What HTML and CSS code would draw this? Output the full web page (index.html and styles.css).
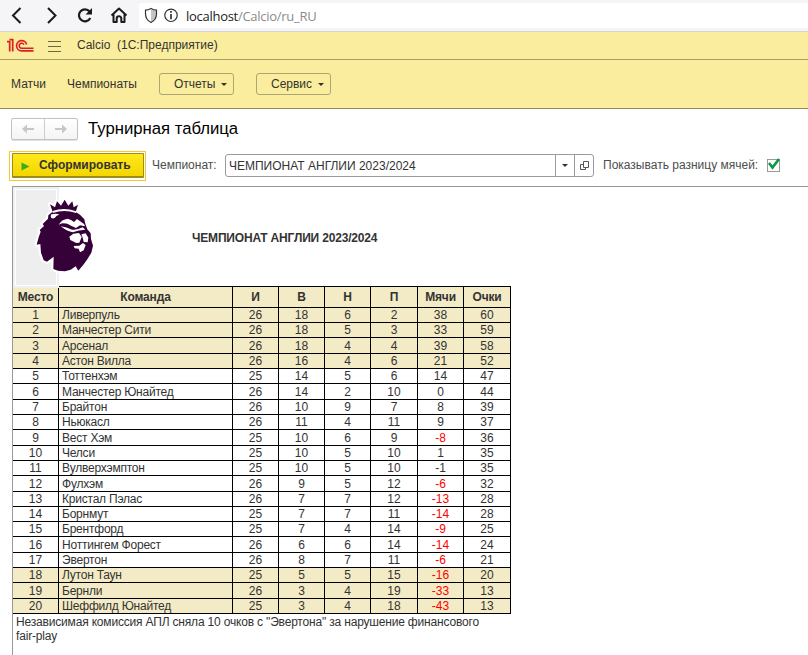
FILE: index.html
```html
<!DOCTYPE html>
<html lang="ru">
<head>
<meta charset="utf-8">
<title>Турнирная таблица</title>
<link rel="stylesheet" href="styles.css">
</head>
<body>
<header class="browser">
  <svg class="browser-icons" width="138" height="31" viewBox="0 0 138 31" fill="none" stroke="#1b1b1d" stroke-width="2">
    <path d="M20.5 8 13 15.5l7.500 7.500M48 8l7.500 7.500L48 23"/>
    <path d="M89.600 11.500A6 6 0 1 0 90.300 18" stroke-width="2.200"/>
    <path d="M92 8v6.500h-6.500z" fill="#1b1b1d" stroke="none"/>
    <path d="m111.500 15.500 7.500-7 7.500 7M113.500 14v8h3.200v-3.500a2.300 2.300 0 0 1 4.600 0V22h3.200v-8" stroke-linejoin="round"/>
  </svg>
  <div class="address">
    <svg width="46" height="26" viewBox="0 0 46 26" fill="none" stroke="#333">
      <path d="M12 6.500v12.300c3-1.400 5-4 5-8V7.700z" fill="#c4c4c6" stroke="none"/>
      <path d="M12 5.500c2 1.200 3.700 1.700 5.500 1.700v3.600c0 4-2.500 7.200-5.500 8.700-3-1.500-5.500-4.700-5.500-8.700V7.200c1.800 0 3.500-.5 5.500-1.700z" stroke-width="1.200"/>
      <circle cx="32" cy="12.300" r="6.200" stroke-width="1.200"/>
      <path d="M32 11v5.300M32 8v1.700" stroke-width="1.700"/>
    </svg>
    <span class="host">localhost</span><span class="path">/Calcio/ru_RU</span>
  </div>
</header>
<div class="titlebar">
  <svg width="28" height="15" viewBox="0 0 28 15" fill="none" stroke="#dc1f26">
    <path d="M0 3.700H2.700V13.500M2.500 1.700H5.700V13.500" stroke-width="1.700"/>
    <path d="M19.600 6.500A5.100 5.100 0 1 0 14.500 12.800H26.500" stroke-width="1.700"/>
    <path d="M17 6.700a2.500 2.500 0 1 0-2.500 3.500H26.500" stroke-width="1.500"/>
  </svg>
  <span class="burger"></span>
  <span class="app-name">Calcio&nbsp; (1С:Предприятие)</span>
</div>
<nav class="menu">
  <span class="link">Матчи</span>
  <span class="link">Чемпионаты</span>
  <span class="drop">Отчеты<i class="caret"></i></span>
  <span class="drop service">Сервис<i class="caret"></i></span>
</nav>
<main>
  <div class="heading">
    <div class="history">
      <span><svg width="14" height="10" viewBox="0 0 14 10"><path d="M1 5l5-4.500V4h7v2H6v3.500z" fill="#c6c6c6"/></svg></span>
      <span><svg width="14" height="10" viewBox="0 0 14 10"><path d="M13 5 8 .5V4H1v2h7v3.500z" fill="#c6c6c6"/></svg></span>
    </div>
    <h1>Турнирная таблица</h1>
  </div>
  <div class="controls">
    <div class="focus"><button class="run"><svg width="9" height="9" viewBox="0 0 9 9"><path d="M.5.500 8.500 4.500l-8 4z" fill="#3cab1d"/></svg>Сформировать</button></div>
    <span class="label">Чемпионат:</span>
    <div class="field">
      <span class="value">ЧЕМПИОНАТ АНГЛИИ 2023/2024</span>
      <span class="cell"><i class="caret"></i></span>
      <span class="cell"><svg width="9" height="9" viewBox="0 0 9 9" fill="none" stroke="#555"><path d="M3.500.500h5v6h-5zM3 3.500H.5v5h5V7"/></svg></span>
    </div>
    <span class="label diff">Показывать разницу мячей:</span>
    <span class="check"><svg width="16" height="14" viewBox="0 0 16 14"><path d="M3 6 6.500 10.500 13 2" fill="none" stroke="#0b9a48" stroke-width="2.700"/></svg></span>
  </div>
  <section class="sheet">
    <div class="sheet-top">
      <div class="logo-box">
        <svg class="lion" width="70" height="84" viewBox="0 0 210 252">
          <path d="M68 53 60 31 75 40 81 22 93 35 104 17 115 35 127 22 131 40 144 32 137 54 150 62 163 76 166 90 172 106 182 118 183 135 189 155 184 176 173 194 164 207 160 212 145 230 137 217 122 227 105 232 84 230 70 225 71 188 51 203 41 199 33 176 31 150 20 152 26 130 32 113 29 108 42 96 38 90 54 74 55 64Z" fill="#360038" stroke="#fff" stroke-width="13" stroke-linejoin="round" paint-order="stroke"/>
          <g fill="#fff">
            <path d="M68 51q34-13 70 1v5q-35-12-70 0z"/>
            <path d="M64 61q16-4 24 1-10 2-13 9-6 4-11 1-4-5 0-11z"/>
            <path d="M86 92q9-16 27-18 11 3 19 10l9-9 21 15 3 7-15-3-12 8-15-7q-19-13-37-3z"/>
            <path d="M92 97q18 2 34 10 15 2 32-7l8 7q-19 0-38 8-15-2-36-18z"/>
            <path d="m118 128 12-9 17-2 8 12-7 17-9 1-18-9z"/>
            <path d="m154 121 13-3 8 13-2 14-12-1-3-13z"/>
            <path d="m131 156 17-1 11-8 8 6-6 16-11 6-4-11-12-1z"/>
          </g>
        </svg>
      </div>
      <h2>ЧЕМПИОНАТ АНГЛИИ 2023/2024</h2>
    </div>
    <table>
      <colgroup><col class="c-place"><col class="c-team"><col class="c-n"><col class="c-n"><col class="c-n"><col class="c-w"><col class="c-n"><col class="c-w"></colgroup>
      <thead><tr><th>Место</th><th>Команда</th><th>И</th><th>В</th><th>Н</th><th>П</th><th>Мячи</th><th>Очки</th></tr></thead>
      <tbody>
        <tr class="zone first"><td>1</td><td>Ливерпуль</td><td>26</td><td>18</td><td>6</td><td>2</td><td>38</td><td>60</td></tr>
        <tr class="zone"><td>2</td><td>Манчестер Сити</td><td>26</td><td>18</td><td>5</td><td>3</td><td>33</td><td>59</td></tr>
        <tr class="zone tall"><td>3</td><td>Арсенал</td><td>26</td><td>18</td><td>4</td><td>4</td><td>39</td><td>58</td></tr>
        <tr class="zone"><td>4</td><td>Астон Вилла</td><td>26</td><td>16</td><td>4</td><td>6</td><td>21</td><td>52</td></tr>
        <tr><td>5</td><td>Тоттенхэм</td><td>25</td><td>14</td><td>5</td><td>6</td><td>14</td><td>47</td></tr>
        <tr class="tall"><td>6</td><td>Манчестер Юнайтед</td><td>26</td><td>14</td><td>2</td><td>10</td><td>0</td><td>44</td></tr>
        <tr><td>7</td><td>Брайтон</td><td>26</td><td>10</td><td>9</td><td>7</td><td>8</td><td>39</td></tr>
        <tr><td>8</td><td>Ньюкасл</td><td>26</td><td>11</td><td>4</td><td>11</td><td>9</td><td>37</td></tr>
        <tr class="tall"><td>9</td><td>Вест Хэм</td><td>25</td><td>10</td><td>6</td><td>9</td><td class="neg">-8</td><td>36</td></tr>
        <tr><td>10</td><td>Челси</td><td>25</td><td>10</td><td>5</td><td>10</td><td>1</td><td>35</td></tr>
        <tr><td>11</td><td>Вулверхэмптон</td><td>25</td><td>10</td><td>5</td><td>10</td><td>-1</td><td>35</td></tr>
        <tr class="tall"><td>12</td><td>Фулхэм</td><td>26</td><td>9</td><td>5</td><td>12</td><td class="neg">-6</td><td>32</td></tr>
        <tr><td>13</td><td>Кристал Пэлас</td><td>26</td><td>7</td><td>7</td><td>12</td><td class="neg">-13</td><td>28</td></tr>
        <tr><td>14</td><td>Борнмут</td><td>25</td><td>7</td><td>7</td><td>11</td><td class="neg">-14</td><td>28</td></tr>
        <tr><td>15</td><td>Брентфорд</td><td>25</td><td>7</td><td>4</td><td>14</td><td class="neg">-9</td><td>25</td></tr>
        <tr class="tall"><td>16</td><td>Ноттингем Форест</td><td>26</td><td>6</td><td>6</td><td>14</td><td class="neg">-14</td><td>24</td></tr>
        <tr><td>17</td><td>Эвертон</td><td>26</td><td>8</td><td>7</td><td>11</td><td class="neg">-6</td><td>21</td></tr>
        <tr class="zone"><td>18</td><td>Лутон Таун</td><td>25</td><td>5</td><td>5</td><td>15</td><td class="neg">-16</td><td>20</td></tr>
        <tr class="zone tall"><td>19</td><td>Бернли</td><td>26</td><td>3</td><td>4</td><td>19</td><td class="neg">-33</td><td>13</td></tr>
        <tr class="zone"><td>20</td><td>Шеффилд Юнайтед</td><td>25</td><td>3</td><td>4</td><td>18</td><td class="neg">-43</td><td>13</td></tr>
      </tbody>
    </table>
    <p class="note">Независимая комиссия АПЛ сняла 10 очков с "Эвертона" за нарушение финансового<br>fair-play</p>
  </section>
</main>
</body>
</html>
```
FILE: styles.css
```css
* { box-sizing: border-box; }
body { margin: 0; height: 655px; overflow: hidden; background: #fff; color: #333; font: 12px/15px "Liberation Sans", Arial, sans-serif; }
svg { display: block; flex: none; }
.browser { display: flex; align-items: flex-start; height: 32px; background: #f5f5f7; border-bottom: 1px solid #d3d3d8; }
.address { display: flex; flex: 1; align-items: center; height: 25px; margin: 3px 0 0 1px; background: #fff; border-radius: 3px 0 0 3px; font: 13px/26px "Open Sans", "Noto Sans", sans-serif; letter-spacing: -.28px; }
.address span { padding-top: 1px; }
.address .host { padding-left: 1px; color: #222; }
.path { color: #8b8b8b; }
.titlebar { display: flex; align-items: center; height: 28px; padding-left: 7px; background: #fbed9e; border-bottom: 1px solid #a79f63; }
.burger { width: 13px; height: 11px; margin: 2px 16px 0 13px; background: linear-gradient(#6c6746 1px, transparent 1px 5px, #6c6746 5px 6px, transparent 6px 10px, #6c6746 10px); }
.app-name { letter-spacing: 0; }
.menu { display: flex; align-items: center; height: 49px; padding-left: 11px; background: #fbed9e; border-bottom: 1px solid #918b5a; }
.link { margin-right: 21px; }
.drop { display: flex; align-items: center; justify-content: space-between; width: 75px; height: 22px; margin-left: 1px; padding: 0 6px 0 14px; border: 1px solid #ada574; border-radius: 3px; }
.drop.service { margin-left: 22px; }
.caret { width: 0; border: 3px solid transparent; border-top-color: #333; border-bottom: 0; }
.heading { display: flex; align-items: center; height: 42px; padding: 0 0 2px 11px; }
.history { display: flex; width: 67px; height: 22px; margin-top: -1px; border: 1px solid #c2c2c2; border-radius: 2px; background: linear-gradient(#fff, #f4f4f4); box-shadow: 0 1px #e2e2e2; }
.history span { display: flex; flex: 1; align-items: center; justify-content: center; }
.history span + span { border-left: 1px solid #ccc; }
h1 { margin: 0 0 0 10px; color: #000; font-size: 16.7px; font-weight: 400; line-height: 20px; }
.controls { display: flex; align-items: flex-start; height: 31px; padding-left: 9px; }
.focus { display: flex; width: 137px; height: 30px; padding: 1px; border: 1px solid #f5c82e; }
.run { display: flex; align-items: center; width: 132px; height: 25px; margin: 0 0 0 1px; padding: 0 0 0 8px; border: 1px solid #9d8c15; border-bottom-width: 2px; border-radius: 1px; background: linear-gradient(#ffe81b, #f4d600); color: #333; font: bold 12px "Liberation Sans", Arial, sans-serif; letter-spacing: .02px; }
.run svg { margin: 3px 9px 0 0; }
.label { width: 73px; margin: 7px 0 0 6px; color: #4d4d4d; white-space: nowrap; }
.field { display: flex; width: 369px; height: 23px; margin-top: 3px; border: 1px solid #9b9b9b; border-radius: 3px; }
.value { flex: 1; padding-left: 3px; line-height: 22px; }
.cell { display: flex; align-items: center; justify-content: center; width: 19px; border-left: 1px solid #9b9b9b; }
.label.diff { width: 164px; margin-left: 9px; }
.check { width: 13px; height: 13px; margin-top: 8px; border: 1px solid #999; }
.check svg { margin: -3px 0 0 -2px; }
.sheet { height: 470px; margin: 4px 0 0 12px; border: 1px solid #999; border-width: 1px 0 0 1px; }
.sheet-top { display: flex; height: 99px; }
.logo-box { position: relative; z-index: 1; width: 46px; height: 101px; border: 2px solid #f0f0f0; background: #eee; box-shadow: inset 0 0 0 1px #fff; }
.lion { position: absolute; left: 15px; top: 5px; }
h2 { margin: 44px 0 0 133px; font-size: 12px; line-height: 15px; letter-spacing: -.18px; }
table { width: 498px; table-layout: fixed; border-collapse: separate; border-spacing: 0; }
.c-place, .c-n { width: 46px; }
.c-team { width: 174px; }
.c-w { width: 47px; }
th, td { padding: 0; border: 0 solid #000; border-width: 0 1px 1px 0; text-align: center; line-height: 14px; overflow: hidden; white-space: nowrap; }
th { height: 22px; border-top-width: 1px; background: #f3ebc6; line-height: 19px; letter-spacing: -.15px; }
td { height: 15px; }
.tall td { height: 16px; }
.first td { padding-top: 1px; line-height: 13px; }
td:nth-child(2) { padding-left: 3px; text-align: left; letter-spacing: -.22px; }
.zone td { background: #f3ebc6; }
td.neg { color: #f00; }
.note { margin: 1px 0 0 3px; line-height: 14px; letter-spacing: -.18px; }
```
